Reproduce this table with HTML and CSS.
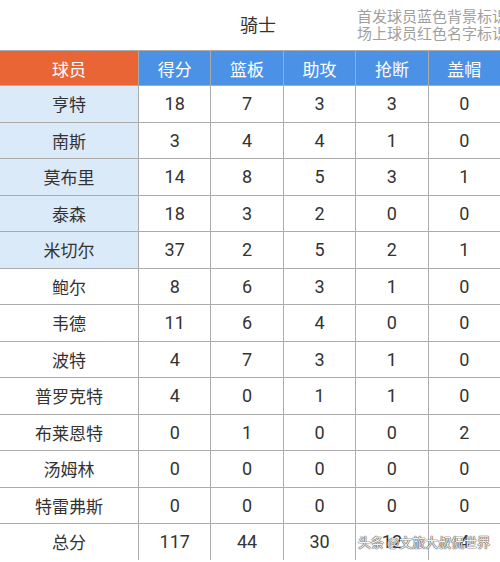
FILE: index.html
```html
<!DOCTYPE html>
<html lang="zh">
<head>
<meta charset="utf-8">
<link rel="stylesheet" href="styles.css">
</head>
<body>
<div class="page">
  <div class="titlebar">
    <div class="title">骑士</div>
    <div class="note">
      <div>首发球员蓝色背景标识</div>
      <div>场上球员红色名字标识</div>
    </div>
  </div>
  <div class="table">
    <div class="cell head name">球员</div>
    <div class="cell head">得分</div>
    <div class="cell head">篮板</div>
    <div class="cell head">助攻</div>
    <div class="cell head">抢断</div>
    <div class="cell head">盖帽</div>

    <div class="cell pname starter">亨特</div><div class="cell">18</div><div class="cell">7</div><div class="cell">3</div><div class="cell">3</div><div class="cell">0</div>
    <div class="cell pname starter">南斯</div><div class="cell">3</div><div class="cell">4</div><div class="cell">4</div><div class="cell">1</div><div class="cell">0</div>
    <div class="cell pname starter">莫布里</div><div class="cell">14</div><div class="cell">8</div><div class="cell">5</div><div class="cell">3</div><div class="cell">1</div>
    <div class="cell pname starter">泰森</div><div class="cell">18</div><div class="cell">3</div><div class="cell">2</div><div class="cell">0</div><div class="cell">0</div>
    <div class="cell pname starter">米切尔</div><div class="cell">37</div><div class="cell">2</div><div class="cell">5</div><div class="cell">2</div><div class="cell">1</div>
    <div class="cell pname">鲍尔</div><div class="cell">8</div><div class="cell">6</div><div class="cell">3</div><div class="cell">1</div><div class="cell">0</div>
    <div class="cell pname">韦德</div><div class="cell">11</div><div class="cell">6</div><div class="cell">4</div><div class="cell">0</div><div class="cell">0</div>
    <div class="cell pname">波特</div><div class="cell">4</div><div class="cell">7</div><div class="cell">3</div><div class="cell">1</div><div class="cell">0</div>
    <div class="cell pname">普罗克特</div><div class="cell">4</div><div class="cell">0</div><div class="cell">1</div><div class="cell">1</div><div class="cell">0</div>
    <div class="cell pname">布莱恩特</div><div class="cell">0</div><div class="cell">1</div><div class="cell">0</div><div class="cell">0</div><div class="cell">2</div>
    <div class="cell pname">汤姆林</div><div class="cell">0</div><div class="cell">0</div><div class="cell">0</div><div class="cell">0</div><div class="cell">0</div>
    <div class="cell pname">特雷弗斯</div><div class="cell">0</div><div class="cell">0</div><div class="cell">0</div><div class="cell">0</div><div class="cell">0</div>
    <div class="cell pname">总分</div><div class="cell">117</div><div class="cell">44</div><div class="cell">30</div><div class="cell">12</div><div class="cell">4</div>
  </div>
  <div class="watermark">头条 @文旅大叔侃世界</div>
</div>
</body>
</html>
```
FILE: styles.css
```css
html, body {
  margin: 0;
  padding: 0;
  background: #ffffff;
  overflow: hidden;
}
body {
  width: 500px;
  height: 562px;
  font-family: Roboto, "Noto Sans CJK SC", sans-serif;
  color: #333333;
}
.page {
  position: relative;
  width: 500px;
  height: 562px;
  overflow: hidden;
}
.titlebar {
  height: 50px;
  display: flex;
  align-items: center;
  padding-left: 240px;
  box-sizing: border-box;
  white-space: nowrap;
}
.title {
  font-family: "Noto Sans CJK SC", sans-serif;
  font-size: 18px;
  color: #333333;
  width: 36px;
  margin-top: -2px;
}
.note {
  margin-left: 81px;
  font-family: "Noto Sans CJK SC", sans-serif;
  font-size: 15px;
  line-height: 17px;
  color: #a0a0a0;
  margin-top: -2px;
}
.table {
  display: grid;
  grid-template-columns: 138px repeat(5, 1fr);
  grid-template-rows: 34px repeat(13, 35.5px);
  gap: 1px;
  padding-top: 1px;
  background: #ababab;
}
.cell {
  background: #ffffff;
  display: flex;
  align-items: center;
  justify-content: center;
  font-size: 18px;
  color: #333333;
}
.pname {
  font-family: "Noto Sans CJK SC", sans-serif;
  font-size: 17px;
}
.head {
  background: #4b92e6;
  color: #ffffff;
  font-family: "Noto Sans CJK SC", sans-serif;
  font-size: 17px;
}
.head.name {
  background: #ea6535;
}
.starter {
  background: #dbeaf9;
}
.watermark {
  position: absolute;
  left: 358px;
  top: 533px;
  font-family: "Noto Sans CJK SC", sans-serif;
  font-size: 13px;
  line-height: 18px;
  color: #f4f4f4;
  text-shadow: 0 0 1px #444, 0 0 1px #444, 0 0 1px #444;
  white-space: nowrap;
}
```
